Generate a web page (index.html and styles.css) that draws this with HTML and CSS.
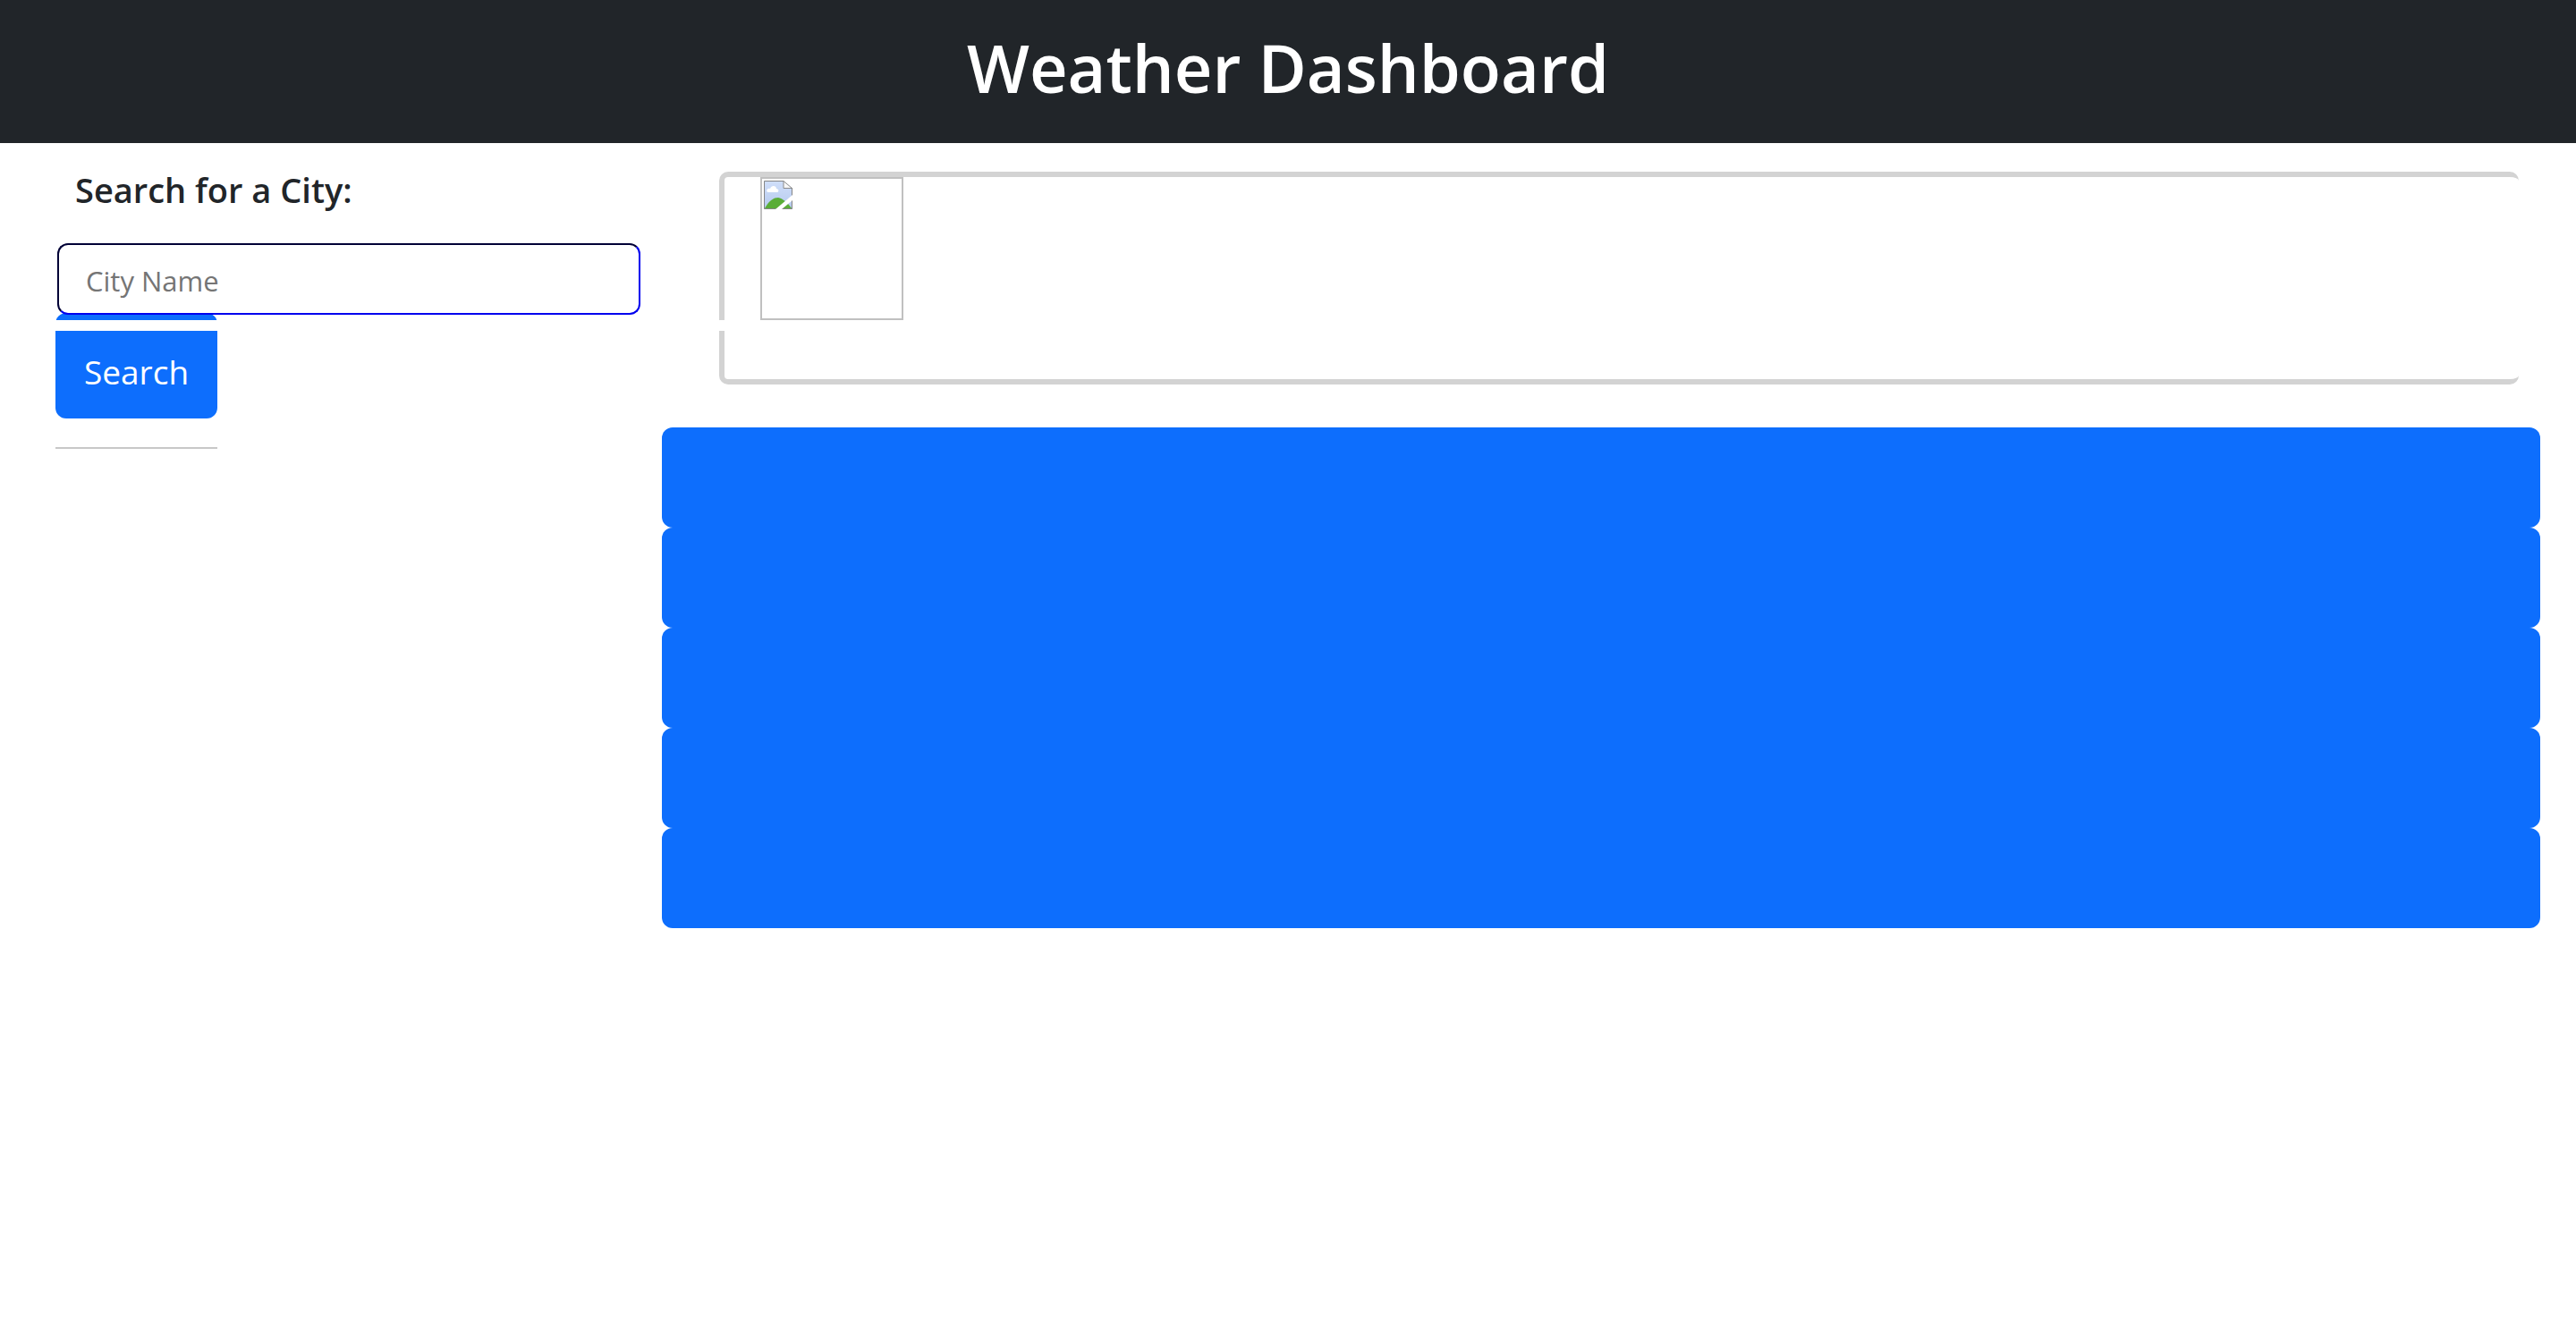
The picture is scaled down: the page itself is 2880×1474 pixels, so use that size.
FILE: index.html
```html
<!DOCTYPE html>
<html lang="en">
<head>
  <meta charset="utf-8">
  <meta name="viewport" content="width=device-width, initial-scale=1">
  <title>Weather Dashboard</title>
  <link rel="stylesheet" href="styles.css">
</head>
<body>
  <header class="site-header">
    <h1 class="site-title">Weather Dashboard</h1>
  </header>
  <main class="dashboard">
    <form class="search">
      <label class="search-label" for="city">Search for a City:</label>
      <input class="search-input" id="city" type="text" placeholder="City Name">
      <div class="search-actions">
        <button class="search-button" type="button">Search</button>
        <hr class="search-rule">
      </div>
    </form>
    <div class="results">
      <section class="current" aria-label="Current weather">
        <div class="current-image">
          <svg class="missing-icon" viewBox="0 0 32 32" aria-hidden="true">
            <defs>
              <linearGradient id="sky" x1="0" y1="0" x2="0" y2="1">
                <stop offset="0" stop-color="#d0dffa"/>
                <stop offset="1" stop-color="#b5c9ee"/>
              </linearGradient>
            </defs>
            <path d="M0 0H22L32 9V32H0Z" fill="url(#sky)"/>
            <path d="M5 13C2 13 3 8 7 9C8 5 14 5 14 9C17 9 17 13 15 13Z" fill="#fff"/>
            <path d="M1 31C6 22 11 19 16 19C21 20 26 24 31 31Z" fill="#5aad38"/>
            <path d="M22 0L32 9H22Z" fill="#f7f7f7"/>
            <path d="M22 .5V8.500H31.500M22 .5L31.500 8.500" fill="none" stroke="#8c8c8c"/>
            <path d="M22 .5H.5V31.500H31.500V8" fill="none" stroke="#858585"/>
            <path d="M13 32L32 16V22L20 32Z" fill="#fff"/>
          </svg>
        </div>
      </section>
      <section class="forecast" aria-label="Five day forecast">
        <div class="forecast-day"></div>
        <div class="forecast-day"></div>
        <div class="forecast-day"></div>
        <div class="forecast-day"></div>
        <div class="forecast-day"></div>
      </section>
    </div>
    <div class="divider"></div>
  </main>
</body>
</html>
```

FILE: styles.css
```css
* {
  box-sizing: border-box;
}

body {
  margin: 0;
  background: #fff;
  color: #212529;
  font-family: "Open Sans", "Noto Sans", sans-serif;
}

.site-header {
  padding: 28px 32px 36px;
  background: #212529;
  color: #fff;
  text-align: center;
}

.site-title {
  margin: 0;
  font-size: 74px;
  font-weight: 600;
  line-height: 96px;
}

.dashboard {
  position: relative;
  display: grid;
  grid-template-columns: 1fr 3fr;
}

.search {
  display: flex;
  flex-direction: column;
  align-items: flex-start;
  padding: 28px 4px 0 62px;
}

.search-label {
  margin: 0 22px 36px;
  font-size: 38px;
  font-weight: 600;
  line-height: 48px;
}

.search-input {
  position: relative;
  z-index: 1;
  align-self: stretch;
  height: 80px;
  margin: 0 0 0 2px;
  padding: 4px 30px 0;
  border: 2px solid;
  border-color: #000036 #0000ee #0000ee #000036;
  border-radius: 12px;
  background: #fff;
  color: inherit;
  font: inherit;
  font-size: 31px;
}

.search-input::placeholder {
  color: #757575;
  opacity: 1;
}

.search-button {
  display: block;
  margin: -2px 0 0;
  padding: 38px 32px 24px;
  border: 0;
  border-radius: 12px;
  background: #0d6efd;
  color: #fff;
  font: inherit;
  font-size: 37px;
  line-height: 56px;
}

.search-rule {
  height: 2px;
  margin: 32px 0;
  border: 0;
  background: #c8c8c8;
}

.results {
  padding: 32px 40px 0 20px;
}

.current {
  height: 238px;
  margin: 0 24px 48px 64px;
  padding-left: 40px;
  border: 6px solid #d3d3d3;
  border-right: 0;
  border-radius: 10px;
}

.current-image {
  width: 160px;
  height: 160px;
  padding: 2px;
  border: 2px solid #c0c0c0;
}

.missing-icon {
  display: block;
  width: 32px;
  height: 32px;
}

.forecast-day {
  height: 112px;
  border-radius: 12px;
  background: #0d6efd;
}

/* White band that runs across the page, over the button and the card */
.divider {
  position: absolute;
  top: 198px;
  right: 0;
  left: 0;
  height: 12px;
  background: #fff;
}
```
